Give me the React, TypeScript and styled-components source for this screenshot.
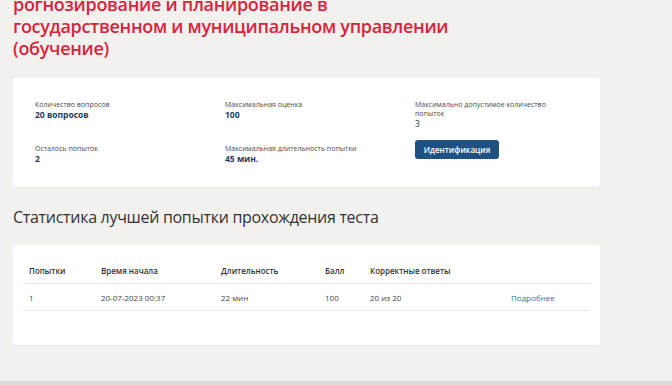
import React from "react";
import styled, { createGlobalStyle } from "styled-components";

const Global = createGlobalStyle`
  html, body { margin: 0; padding: 0; background: #f2f1ee; }
  body { font-family: "Open Sans", "Liberation Sans", sans-serif; overflow: hidden; }
`;

const Page = styled.div`
  width: 672px;
  height: 385px;
  overflow: hidden;
  display: flex;
  flex-direction: column;
  background: #f2f1ee;
`;

const Main = styled.div`
  flex: 1;
  padding: 0 72px 0 13px;
  display: flex;
  flex-direction: column;
`;

const Title = styled.h1`
  margin: -7px 0 19px 0;
  font-size: 18px;
  line-height: 22px;
  font-weight: 600;
  color: #d9233c;
  letter-spacing: -0.3px;
`;

const Card = styled.div<{ $pad: string; $h: number }>`
  background: #fff;
  border-radius: 3px;
  box-shadow: 0 1px 1px rgba(0,0,0,0.04);
  padding: ${(p) => p.$pad};
  height: ${(p) => p.$h}px;
  box-sizing: border-box;
`;

const InfoGrid = styled.div`
  display: grid;
  grid-template-columns: 190px 190px 150px;
  row-gap: 16px;
`;

const Item = styled.div`
  display: flex;
  flex-direction: column;
`;

const Label = styled.span`
  font-size: 7px;
  line-height: 8.5px;
  color: #4a4a4a;
`;

const Value = styled.span<{ $plain?: boolean }>`
  font-size: 8.5px;
  line-height: 10px;
  font-weight: ${(p) => (p.$plain ? 400 : 700)};
  color: ${(p) => (p.$plain ? "#333" : "#1d3a63")};
  margin-top: ${(p) => (p.$plain ? 1 : 0)}px;
`;

const Button = styled.button`
  align-self: flex-start;
  width: 84px;
  height: 19px;
  margin-top: -5px;
  border: none;
  border-radius: 3px;
  background: #1e5182;
  color: #fff;
  font-family: inherit;
  font-size: 8px;
  font-weight: 600;
  padding: 0;
`;

const Subtitle = styled.h2`
  margin: 20px 0 18px 0;
  font-size: 16px;
  line-height: 20px;
  font-weight: 400;
  color: #333;
  letter-spacing: -0.3px;
`;

const Table = styled.div`
  display: flex;
  flex-direction: column;
`;

const Row = styled.div<{ $head?: boolean }>`
  display: grid;
  grid-template-columns: 72px 120px 104px 45px 141px 1fr;
  padding: 0 6px;
  height: ${(p) => (p.$head ? 25 : 26)}px;
  align-items: center;
  border-bottom: 1px solid #e8e8e8;
  font-size: 8px;
  color: ${(p) => (p.$head ? "#333" : "#444")};
  font-weight: ${(p) => (p.$head ? 600 : 400)};
`;

const Link = styled.a`
  color: #3b6c9c;
  text-decoration: none;
`;

const Footer = styled.div`
  height: 4px;
  background: #dcdbd7;
`;

export default function App() {
  return (
    <Page>
      <Global />
      <Main>
        <Title>
          рогнозирование и планирование в<br />
          государственном и муниципальном управлении<br />
          (обучение)
        </Title>
        <Card $pad="23px 20px 0 22px" $h={109}>
          <InfoGrid>
            <Item>
              <Label>Количество вопросов</Label>
              <Value>20 вопросов</Value>
            </Item>
            <Item>
              <Label>Максимальная оценка</Label>
              <Value>100</Value>
            </Item>
            <Item>
              <Label>Максимально допустимое количество попыток</Label>
              <Value $plain>3</Value>
            </Item>
            <Item>
              <Label>Осталось попыток</Label>
              <Value>2</Value>
            </Item>
            <Item>
              <Label>Максимальная длительность попытки</Label>
              <Value>45 мин.</Value>
            </Item>
            <Item>
              <Button>Идентификация</Button>
            </Item>
          </InfoGrid>
        </Card>
        <Subtitle>Статистика лучшей попытки прохождения теста</Subtitle>
        <Card $pad="13px 10px 0 10px" $h={100}>
          <Table>
            <Row $head>
              <span>Попытки</span>
              <span>Время начала</span>
              <span>Длительность</span>
              <span>Балл</span>
              <span>Корректные ответы</span>
              <span />
            </Row>
            <Row>
              <span>1</span>
              <span>20-07-2023 00:37</span>
              <span>22 мин</span>
              <span>100</span>
              <span>20 из 20</span>
              <Link href="#">Подробнее</Link>
            </Row>
          </Table>
        </Card>
      </Main>
      <Footer />
    </Page>
  );
}
